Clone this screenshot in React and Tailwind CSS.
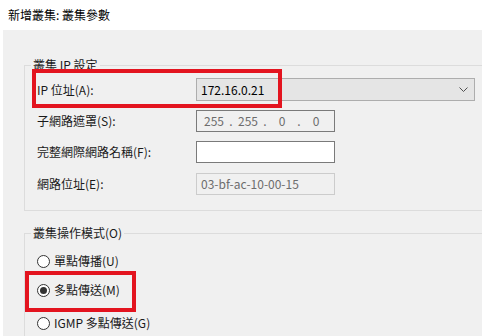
import React from "react";

const font = { fontFamily: '"Noto Sans CJK TC", "Noto Sans", sans-serif' };

const Label = ({ children }) => (
  <div className="w-[171px] pl-[12px] text-[12px] leading-[16px] text-[#1a1a1a]">{children}</div>
);

const Radio = ({ checked, children, className = "" }) => (
  <div className={"flex items-center h-[16px] pl-[12px] " + className}>
    <span className="w-[13px] h-[13px] rounded-full border border-[#333] bg-white flex items-center justify-center">
      {checked && <span className="w-[7px] h-[7px] rounded-full bg-[#333]" />}
    </span>
    <span className="ml-[4px] text-[12px] leading-[16px] text-[#1a1a1a]">{children}</span>
  </div>
);

export default function App() {
  return (
    <div className="relative w-[482px] h-[336px] bg-white overflow-hidden flex flex-col" style={font}>
      {/* Title */}
      <div className="h-[30px] pl-[8px] flex items-center text-[12px] text-black shrink-0">新增叢集: 叢集參數</div>

      {/* Dialog body */}
      <div className="ml-[3px] flex-1 bg-[#f0f0f0] pl-[21px] pt-[29px] overflow-hidden">
        <fieldset className="w-[480px] border border-[#dcdcdc] pb-[15px]">
          <legend className="ml-[6px] px-[2px] text-[12px] leading-[12px] text-[#1a1a1a]">叢集 IP 設定</legend>

          <div className="mt-[7px] flex items-center h-[23px]">
            <Label>IP 位址(A):</Label>
            <div className="w-[279px] h-[23px] bg-[#e5e5e5] border border-[#adadad] flex items-center justify-between pl-[4px] pr-[6px] text-[12px] text-black">
              <span>172.16.0.21</span>
              <svg width="9" height="6" viewBox="0 0 9 6" fill="none">
                <polyline points="0.5,0.5 4.5,4.5 8.5,0.5" stroke="#505050" strokeWidth="1" />
              </svg>
            </div>
          </div>

          <div className="mt-[9px] flex items-center h-[22px]">
            <Label>子網路遮罩(S):</Label>
            <div className="w-[139px] h-[22px] border border-[#7a7a7a] bg-[#f0f0f0] flex items-center pl-[3px] text-[12px] text-[#6d6d6d]">
              <span className="w-[28px] text-center">255</span>
              <span className="w-[6px] text-center">.</span>
              <span className="w-[28px] text-center">255</span>
              <span className="w-[6px] text-center">.</span>
              <span className="w-[28px] text-center">0</span>
              <span className="w-[6px] text-center">.</span>
              <span className="w-[28px] text-center">0</span>
            </div>
          </div>

          <div className="mt-[9px] flex items-center h-[22px]">
            <Label>完整網際網路名稱(F):</Label>
            <div className="w-[139px] h-[22px] border border-[#7a7a7a] bg-white" />
          </div>

          <div className="mt-[10px] flex items-center h-[22px]">
            <Label>網路位址(E):</Label>
            <div className="w-[139px] h-[22px] border border-[#cccccc] bg-[#f0f0f0] flex items-center pl-[4px] text-[12px] text-[#6d6d6d]">
              03-bf-ac-10-00-15
            </div>
          </div>
        </fieldset>

        <fieldset className="mt-[16px] w-[480px] border border-[#dcdcdc] pb-[20px]">
          <legend className="ml-[6px] px-[2px] text-[12px] leading-[12px] text-[#1a1a1a]">叢集操作模式(O)</legend>
          <Radio className="mt-[14px]">單點傳播(U)</Radio>
          <Radio checked className="mt-[13px]">多點傳送(M)</Radio>
          <Radio className="mt-[17px]">IGMP 多點傳送(G)</Radio>
        </fieldset>
      </div>

      {/* Red annotation boxes */}
      <div className="absolute left-[32px] top-[69px] w-[250px] h-[39px] border-4 border-[#e3141f]" />
      <div className="absolute left-[25px] top-[271px] w-[111px] h-[41px] border-4 border-[#e3141f]" />
    </div>
  );
}
